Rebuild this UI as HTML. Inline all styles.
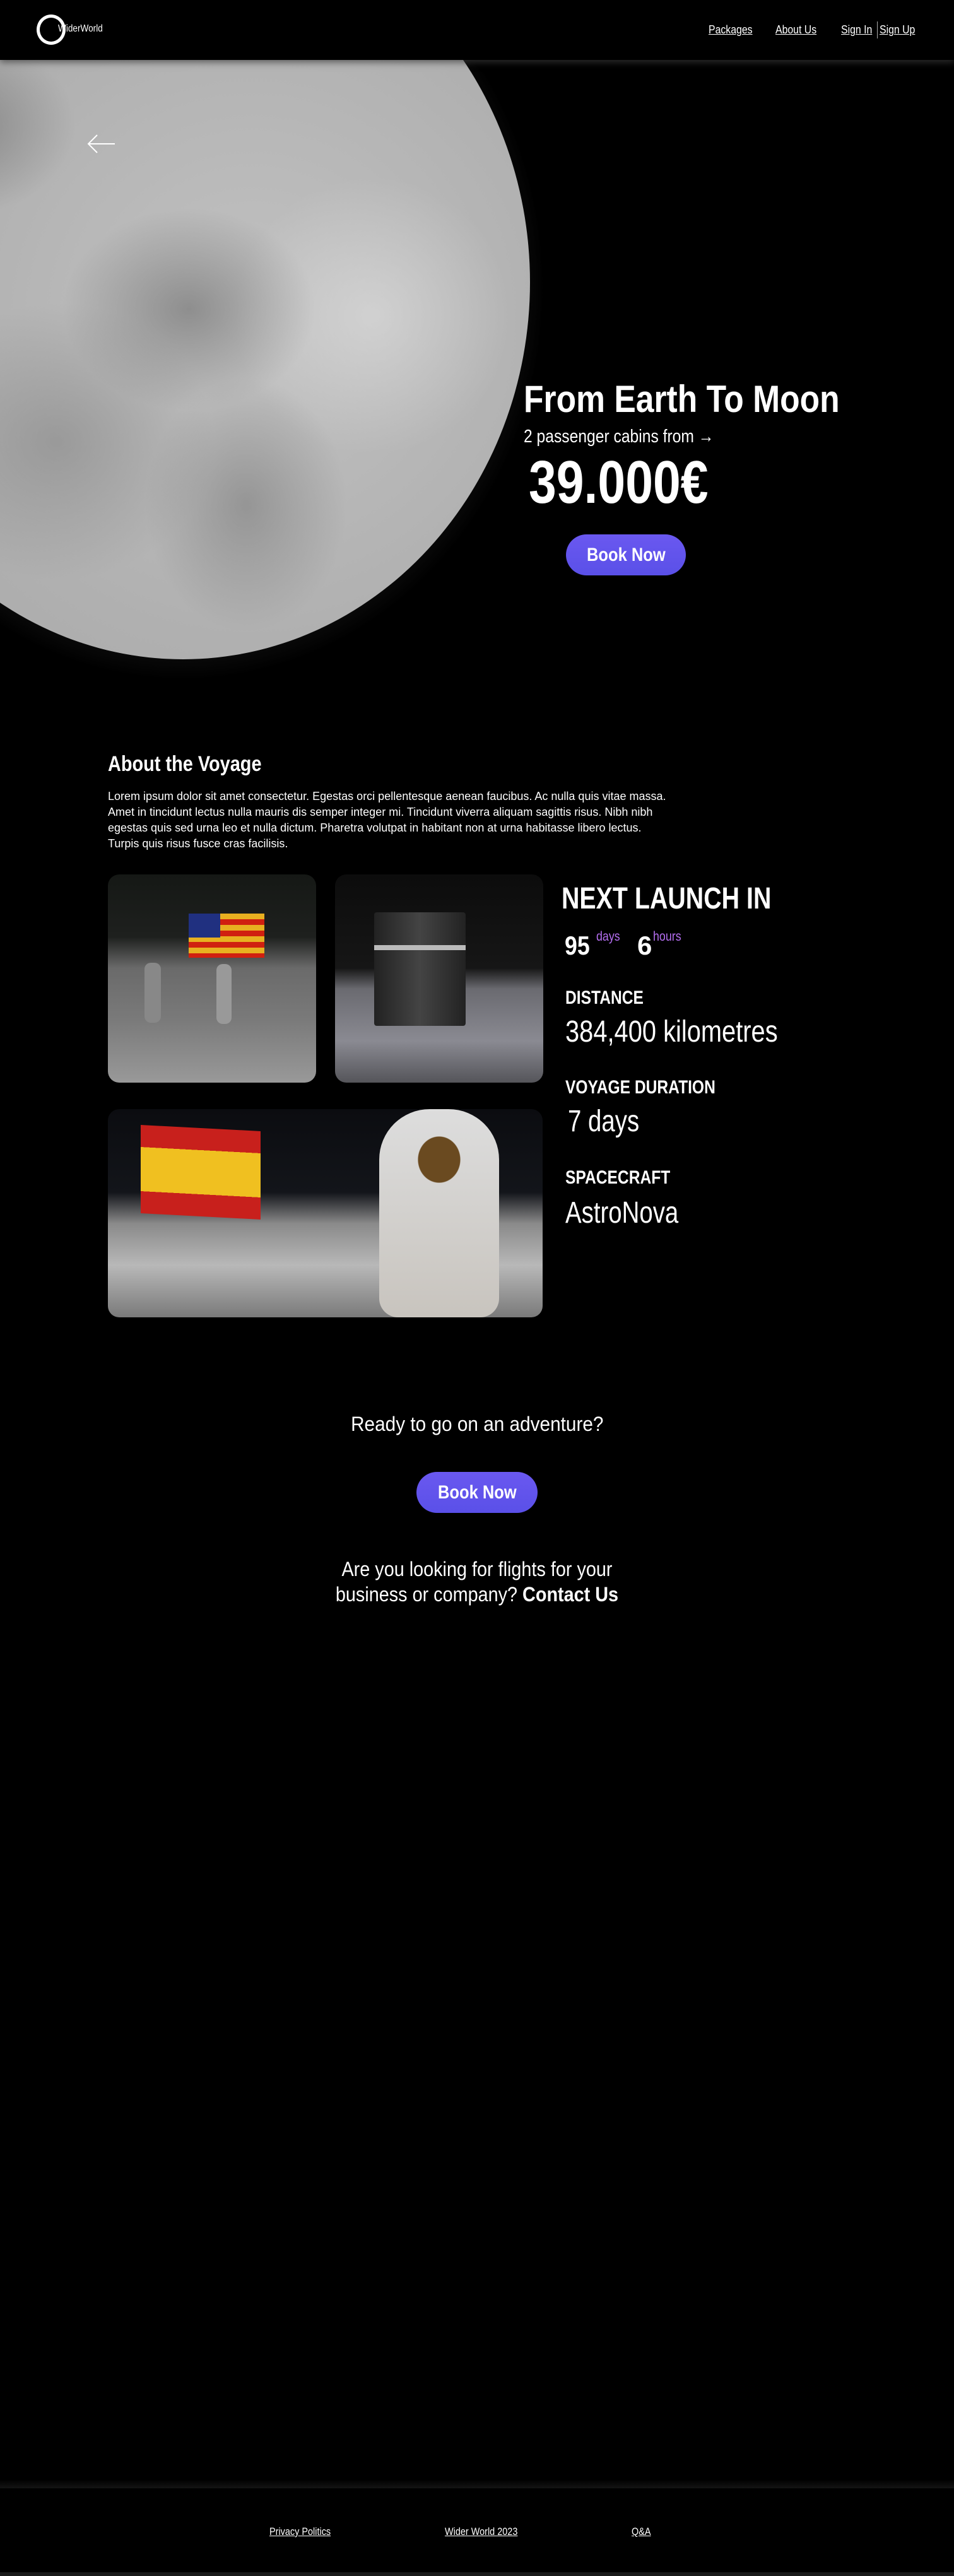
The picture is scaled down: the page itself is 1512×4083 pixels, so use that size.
<!DOCTYPE html>
<html><head><meta charset="utf-8"><style>
*{margin:0;padding:0;box-sizing:border-box}
body{width:1512px;height:4083px;background:#000;color:#fff;font-family:"Liberation Sans",sans-serif;position:relative;overflow:hidden}
.a{position:absolute;white-space:nowrap}
.s{display:inline-block;transform-origin:left center}
.u{text-decoration:underline}
nav{position:absolute;left:0;top:0;width:1512px;height:95px;background:#000;box-shadow:0 4px 10px rgba(60,60,60,.7);z-index:5}
nav a{color:#fff;font-size:18px}
.btn{position:absolute;background:linear-gradient(180deg,#6a58f0,#5a50e8);border-radius:34px;color:#fff;font-weight:bold;text-align:center}
.img{position:absolute;border-radius:18px;overflow:hidden}
</style></head><body>
<nav>
 <div class="a" style="left:58px;top:23px;width:46px;height:48px;border:5px solid #fff;border-radius:50%"></div>
 <div class="a" style="left:92px;top:37px;font-size:16px"><span class="s" style="transform:scaleX(.85)">WiderWorld</span></div>
 <a class="a" style="left:1123px;top:37px"><span class="s u" style="transform:scaleX(.88)">Packages</span></a>
 <a class="a" style="left:1229px;top:37px"><span class="s u" style="transform:scaleX(.88)">About Us</span></a>
 <a class="a" style="left:1333px;top:37px"><span class="s u" style="transform:scaleX(.88)">Sign In</span></a>
 <div class="a" style="left:1390px;top:34px;width:1px;height:27px;background:#aaa"></div>
 <a class="a" style="left:1394px;top:37px"><span class="s u" style="transform:scaleX(.88)">Sign Up</span></a>
</nav>
<!-- moon -->
<div class="a" style="left:-280px;top:-165px;width:1140px;height:1240px;border-radius:50%;background:radial-gradient(ellipse at center,#141414 62%,#000 71%)"></div>
<div class="a" style="left:-260px;top:-150px;width:1100px;height:1195px;border-radius:50%;overflow:hidden;background:
radial-gradient(ellipse 180px 140px at 200px 350px,rgba(110,110,110,.6),transparent),
radial-gradient(ellipse 200px 160px at 560px 640px,rgba(110,110,110,.6),transparent),
radial-gradient(ellipse 160px 200px at 650px 950px,rgba(115,115,115,.5),transparent),
radial-gradient(ellipse 250px 220px at 350px 850px,rgba(120,120,120,.45),transparent),
radial-gradient(ellipse 220px 220px at 850px 650px,rgba(230,230,230,.5),transparent),
radial-gradient(ellipse at 60% 55%,#c2c2c2 0%,#b0b0b0 55%,#a8a8a8 88%,#dcdcdc 99%)"></div>
<svg class="a" style="left:138px;top:212px" width="46" height="32" viewBox="0 0 46 32"><path d="M44 16H3M16 2L2 16l14 14" fill="none" stroke="#fff" stroke-width="2"/></svg>
<div class="a" style="left:830px;top:598px;font-size:60px;font-weight:bold"><span class="s" style="transform:scaleX(.86)">From Earth To Moon</span></div>
<div class="a" style="left:830px;top:676px;font-size:29px"><span class="s" style="transform:scaleX(.85)">2 passenger cabins from →</span></div>
<div class="a" style="left:838px;top:710px;font-size:96px;font-weight:bold"><span class="s" style="transform:scaleX(.82)">39.000€</span></div>
<div class="btn" style="left:897px;top:847px;width:190px;height:65px;line-height:65px;font-size:30px"><span class="s" style="transform:scaleX(.85);transform-origin:center">Book Now</span></div>

<div class="a" style="left:171px;top:1192px;font-size:34px;font-weight:bold"><span class="s" style="transform:scaleX(.85)">About the Voyage</span></div>
<div class="a" style="left:171px;top:1250px;font-size:18px;line-height:25px"><span class="s" style="transform:scaleX(1.0);transform-origin:left top">Lorem ipsum dolor sit amet consectetur. Egestas orci pellentesque aenean faucibus. Ac nulla quis vitae massa.<br>Amet in tincidunt lectus nulla mauris dis semper integer mi. Tincidunt viverra aliquam sagittis risus. Nibh nibh<br>egestas quis sed urna leo et nulla dictum. Pharetra volutpat in habitant non at urna habitasse libero lectus.<br>Turpis quis risus fusce cras facilisis.</span></div>

<div class="img" style="left:171px;top:1386px;width:330px;height:330px;background:linear-gradient(180deg,#151815 0%,#1e201e 30%,#6a6a6a 45%,#7a7a7a 70%,#999 100%)">
 <div class="a" style="left:128px;top:62px;width:120px;height:70px;background:repeating-linear-gradient(180deg,#e8b020 0 9px,#d02010 9px 18px)"></div>
 <div class="a" style="left:128px;top:62px;width:50px;height:38px;background:#203080"></div>
 <div class="a" style="left:58px;top:140px;width:26px;height:95px;background:#888;border-radius:10px"></div>
 <div class="a" style="left:172px;top:142px;width:24px;height:95px;background:#999;border-radius:10px"></div>
</div>
<div class="img" style="left:531px;top:1386px;width:330px;height:330px;background:linear-gradient(180deg,#0c0c0c 0%,#161616 45%,#6a6a70 55%,#8a8a92 80%,#55555a 100%)">
 <div class="a" style="left:62px;top:60px;width:145px;height:180px;background:linear-gradient(90deg,#222,#444,#222);border-radius:4px"></div>
 <div class="a" style="left:62px;top:112px;width:145px;height:8px;background:#bbb"></div>
</div>
<div class="img" style="left:171px;top:1758px;width:689px;height:330px;background:linear-gradient(180deg,#0b0c10 0%,#13151a 40%,#8a8a8a 55%,#b8b8b8 75%,#7a7a7a 100%)">
 <div class="a" style="left:52px;top:30px;width:190px;height:140px;background:linear-gradient(180deg,#c8201c 0 25%,#f0c020 25% 75%,#c8201c 75%);transform:skewY(3deg)"></div>
 <div class="a" style="left:430px;top:0;width:190px;height:330px;background:radial-gradient(ellipse 55px 60px at 95px 80px,#6a4a20 60%,transparent 62%),linear-gradient(180deg,#ddd,#c8c4be);border-radius:80px 80px 30px 30px"></div>
</div>

<div class="a" style="left:890px;top:1397px;font-size:48px;font-weight:bold"><span class="s" style="transform:scaleX(.82)">NEXT LAUNCH IN</span></div>
<div class="a" style="left:895px;top:1475px;font-size:42px;font-weight:bold"><span class="s" style="transform:scaleX(.85)">95</span></div>
<div class="a" style="left:945px;top:1473px;font-size:21px;color:#b46ef0"><span class="s" style="transform:scaleX(.85)">days</span></div>
<div class="a" style="left:1010px;top:1475px;font-size:42px;font-weight:bold">6</div>
<div class="a" style="left:1035px;top:1473px;font-size:21px;color:#b46ef0"><span class="s" style="transform:scaleX(.85)">hours</span></div>
<div class="a" style="left:896px;top:1565px;font-size:30px;font-weight:bold"><span class="s" style="transform:scaleX(.82)">DISTANCE</span></div>
<div class="a" style="left:896px;top:1608px;font-size:48px"><span class="s" style="transform:scaleX(.83)">384,400 kilometres</span></div>
<div class="a" style="left:896px;top:1707px;font-size:30px;font-weight:bold"><span class="s" style="transform:scaleX(.82)">VOYAGE DURATION</span></div>
<div class="a" style="left:900px;top:1750px;font-size:48px"><span class="s" style="transform:scaleX(.8)">7 days</span></div>
<div class="a" style="left:896px;top:1850px;font-size:30px;font-weight:bold"><span class="s" style="transform:scaleX(.82)">SPACECRAFT</span></div>
<div class="a" style="left:896px;top:1895px;font-size:48px"><span class="s" style="transform:scaleX(.8)">AstroNova</span></div>

<div class="a" style="left:0;width:1512px;text-align:center;top:2239px;font-size:32px"><span class="s" style="transform:scaleX(.93);transform-origin:center">Ready to go on an adventure?</span></div>
<div class="btn" style="left:660px;top:2333px;width:192px;height:65px;line-height:65px;font-size:30px"><span class="s" style="transform:scaleX(.85);transform-origin:center">Book Now</span></div>
<div class="a" style="left:0;width:1512px;text-align:center;top:2467px;font-size:32px;line-height:40px"><span class="s" style="transform:scaleX(.9);transform-origin:center">Are you looking for flights for your<br>business or company? <b>Contact Us</b></span></div>

<div class="a" style="left:0;top:3930px;width:1512px;height:14px;background:linear-gradient(180deg,#000,#141414)"></div>
<a class="a" style="left:427px;top:4003px;color:#fff;font-size:17px"><span class="s u" style="transform:scaleX(.85)">Privacy Politics</span></a>
<a class="a" style="left:705px;top:4003px;color:#fff;font-size:17px"><span class="s u" style="transform:scaleX(.85)">Wider World 2023</span></a>
<a class="a" style="left:1001px;top:4003px;color:#fff;font-size:17px"><span class="s u" style="transform:scaleX(.85)">Q&amp;A</span></a>
<div class="a" style="left:0;top:4077px;width:1512px;height:6px;background:#1a1a1a"></div>
</body></html>
